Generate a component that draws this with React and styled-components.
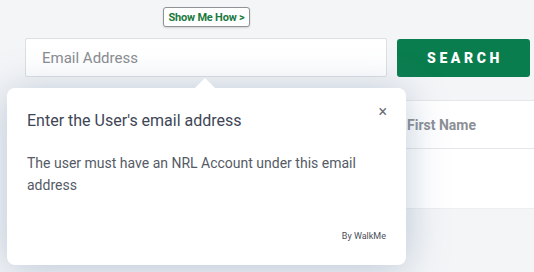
import React from "react";
import styled, { createGlobalStyle } from "styled-components";

const Global = createGlobalStyle`
  html, body { margin: 0; padding: 0; }
  body {
    width: 534px; height: 272px; overflow: hidden;
    background: #f4f5f7;
    font-family: Roboto, "Noto Sans", sans-serif;
  }
`;

const Page = styled.div`
  position: relative;
  width: 534px;
  height: 272px;
  overflow: hidden;
  background: #f4f5f7;
  padding-top: 38px;
  box-sizing: border-box;
`;

const SearchRow = styled.div`
  display: flex;
  align-items: center;
  gap: 10px;
  padding-left: 25px;
`;

const EmailInput = styled.div`
  width: 362px;
  height: 39px;
  box-sizing: border-box;
  background: #fff;
  border: 1px solid #dcdfe3;
  border-radius: 2px;
  display: flex;
  align-items: center;
  padding-left: 16px;
  font-size: 15px;
  color: #8a8c90;
`;

const SearchButton = styled.div`
  width: 133px;
  height: 38px;
  background: #0a7d4e;
  border-radius: 3px;
  color: #fff;
  font-weight: 900;
  font-size: 14px;
  letter-spacing: 3.6px;
  display: flex;
  align-items: center;
  justify-content: center;
  padding-left: 3px;
  box-sizing: border-box;
`;

const Table = styled.div`
  margin-top: 23px;
  margin-left: 25px;
  background: #fff;
  border-top: 1px solid #e6e7ea;
`;

const HeaderRow = styled.div`
  height: 47px;
  border-bottom: 1px solid #e6e7ea;
  display: flex;
  align-items: center;
  padding-left: 382px;
  font-size: 14px;
  font-weight: 700;
  color: #8b8f96;
`;

const BodyRow = styled.div`
  height: 59px;
  border-bottom: 1px solid #eceef0;
`;

const Badge = styled.div`
  position: absolute;
  left: 163px;
  top: 7px;
  height: 20px;
  width: 87px;
  box-sizing: border-box;
  background: #fff;
  border: 1px solid #8f9296;
  border-radius: 3px;
  box-shadow: 0 1px 2px rgba(0,0,0,0.15);
  display: flex;
  align-items: center;
  justify-content: center;
  font-size: 11px;
  font-weight: 700;
  color: #1a7a3e;
  letter-spacing: -0.2px;
`;

const Popup = styled.div`
  position: absolute;
  left: 7px;
  top: 88px;
  width: 399px;
  height: 177px;
  box-sizing: border-box;
  background: #fff;
  border-radius: 8px;
  box-shadow: 0 4px 40px rgba(90, 120, 160, 0.38);
  padding: 22px 20px 0 20px;
  display: flex;
  flex-direction: column;

  &::before {
    content: "";
    position: absolute;
    left: 187px;
    top: -10px;
    border-left: 11px solid transparent;
    border-right: 11px solid transparent;
    border-bottom: 11px solid #fff;
  }
`;

const TitleRow = styled.div`
  display: flex;
  justify-content: space-between;
  align-items: flex-start;
`;

const Title = styled.div`
  font-size: 16px;
  color: #3e4656;
  line-height: 22px;
`;

const Close = styled.div`
  font-size: 16px;
  color: #6a6f78;
  line-height: 1;
  margin-top: -6px;
  margin-right: -1px;
`;

const Body = styled.div`
  margin-top: 20px;
  width: 340px;
  font-size: 14px;
  line-height: 22px;
  color: #555b66;
`;

const Footer = styled.div`
  margin-top: auto;
  margin-bottom: 24px;
  align-self: flex-end;
  font-size: 9px;
  color: #4a4f58;
`;

export default function App() {
  return (
    <>
      <Global />
      <Page>
        <SearchRow>
          <EmailInput>Email Address</EmailInput>
          <SearchButton>SEARCH</SearchButton>
        </SearchRow>
        <Table>
          <HeaderRow>First Name</HeaderRow>
          <BodyRow />
        </Table>
        <Badge>Show Me How &gt;</Badge>
        <Popup>
          <TitleRow>
            <Title>Enter the User's email address</Title>
            <Close>×</Close>
          </TitleRow>
          <Body>The user must have an NRL Account under this email address</Body>
          <Footer>By WalkMe</Footer>
        </Popup>
      </Page>
    </>
  );
}
